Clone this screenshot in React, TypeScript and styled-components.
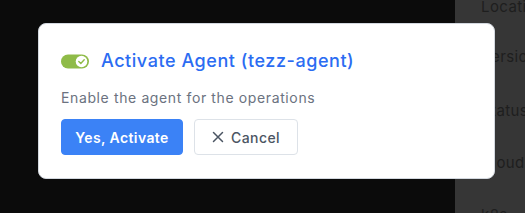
import React from "react";
import styled, { createGlobalStyle } from "styled-components";

const Global = createGlobalStyle`
  html, body { margin: 0; padding: 0; background: #0b0b0b; }
  body { font-family: Inter, "Open Sans", sans-serif; }
  #root { width: 525px; height: 213px; overflow: hidden; }
`;

const Screen = styled.div`
  position: relative;
  width: 525px;
  height: 213px;
  display: grid;
  grid-template-columns: 455px 1fr;
  background: #0b0b0b;
`;

const Backdrop = styled.div`
  background: #0b0b0b;
`;

const Drawer = styled.div`
  background: #363636;
  display: flex;
  flex-direction: column;
  padding: 0 0 0 26px;
  overflow: hidden;
`;

const DrawerLabel = styled.div<{ $top: number }>`
  margin-top: ${(p) => p.$top}px;
  font-size: 15px;
  line-height: 18px;
  letter-spacing: 0.4px;
  color: #1e1e1e;
  white-space: nowrap;
`;

const ModalLayer = styled.div`
  position: absolute;
  left: 38px;
  top: 23px;
`;

const Modal = styled.div`
  width: 457px;
  height: 156px;
  box-sizing: border-box;
  background: #fff;
  border: 1px solid #d3d8df;
  border-radius: 8px;
  padding: 26px 22px 0 22px;
  display: flex;
  flex-direction: column;
`;

const TitleRow = styled.div`
  display: flex;
  align-items: center;
  gap: 12px;
  height: 22px;
`;

const Title = styled.h2`
  margin: 0;
  font-size: 18px;
  font-weight: 500;
  color: #2b6cf2;
  letter-spacing: 0.55px;
  line-height: 22px;
`;

const Desc = styled.p`
  margin: 17px 0 0 0;
  font-size: 14px;
  line-height: 18px;
  letter-spacing: 0.62px;
  color: #6b7280;
`;

const Actions = styled.div`
  display: flex;
  gap: 11px;
  margin-top: 12px;
`;

const Button = styled.button<{ $primary?: boolean }>`
  height: 36px;
  box-sizing: border-box;
  border-radius: 4px;
  font-family: inherit;
  font-size: 14px;
  letter-spacing: 0.4px;
  display: inline-flex;
  align-items: center;
  justify-content: center;
  gap: 7px;
  cursor: pointer;
  ${(p) =>
    p.$primary
      ? `background:#3b82f6;border:1px solid #3b82f6;color:#fff;font-weight:600;width:122px;`
      : `background:#fff;border:1px solid #dde2e8;color:#4b5563;font-weight:500;width:104px;`}
`;

const Toggle = () => (
  <svg width="28" height="15" viewBox="0 0 28 15">
    <rect x="0" y="0.5" width="28" height="14" rx="7" fill="#8fbb48" />
    <circle cx="20.5" cy="7.5" r="5.8" fill="#fff" />
    <path d="M17.8 7.6 L19.8 9.5 L23.2 5.8" stroke="#8fbb48" strokeWidth="1.4" fill="none" strokeLinecap="round" strokeLinejoin="round" />
  </svg>
);

const XIcon = () => (
  <svg width="12" height="12" viewBox="0 0 12 12">
    <path d="M1.5 1.5 L10.5 10.5 M10.5 1.5 L1.5 10.5" stroke="#4b5563" strokeWidth="1.5" strokeLinecap="round" />
  </svg>
);

export default function App() {
  return (
    <>
      <Global />
      <Screen>
        <Backdrop />
        <Drawer>
          <DrawerLabel $top={-2}>Location</DrawerLabel>
          <DrawerLabel $top={32}>Version</DrawerLabel>
          <DrawerLabel $top={36}>Status</DrawerLabel>
          <DrawerLabel $top={34}>Cloud</DrawerLabel>
          <DrawerLabel $top={34}>k8s</DrawerLabel>
        </Drawer>
        <ModalLayer>
          <Modal>
            <TitleRow>
              <Toggle />
              <Title>Activate Agent (tezz-agent)</Title>
            </TitleRow>
            <Desc>Enable the agent for the operations</Desc>
            <Actions>
              <Button $primary>Yes, Activate</Button>
              <Button>
                <XIcon />
                Cancel
              </Button>
            </Actions>
          </Modal>
        </ModalLayer>
      </Screen>
    </>
  );
}
